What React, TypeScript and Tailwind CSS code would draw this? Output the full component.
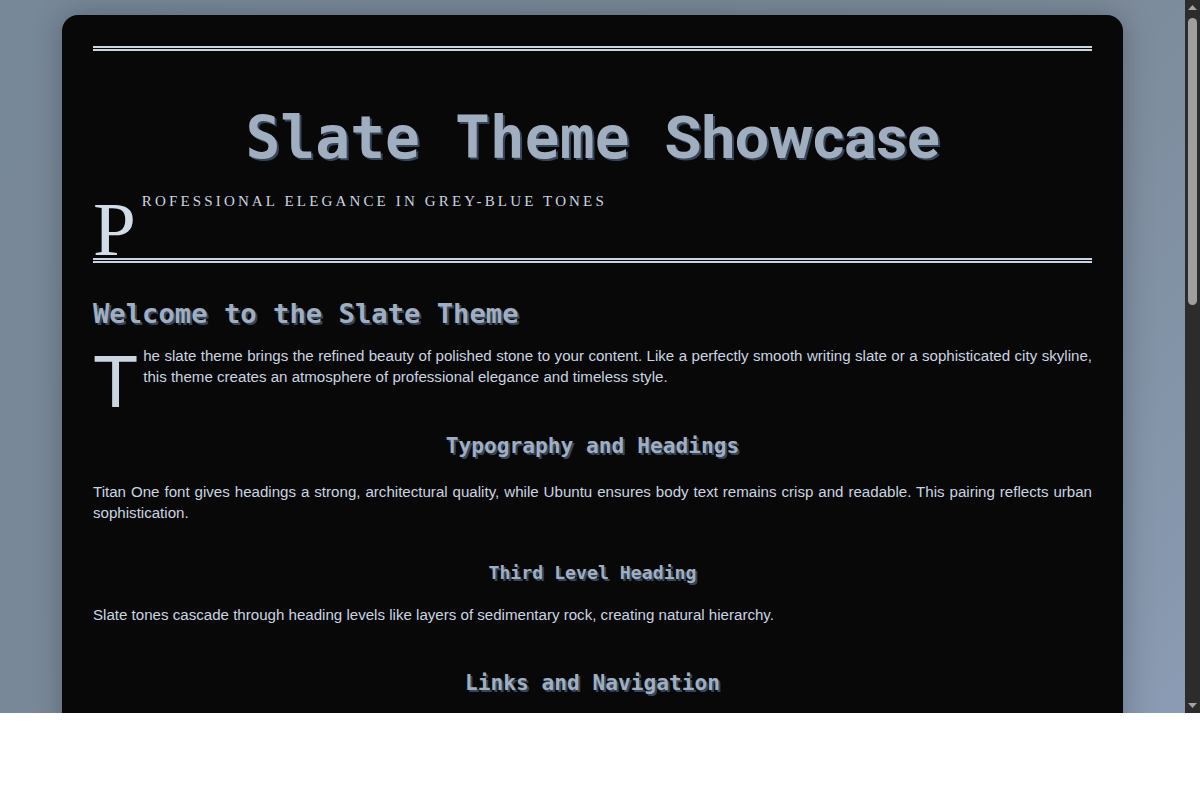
const mono = "font-['DejaVu_Sans_Mono',monospace] font-bold leading-[1.2] text-[#a0aec0] [text-shadow:2px_2px_0_#364559]";
const body = "font-['Liberation_Sans',Arial,sans-serif] text-[15.1px] leading-[21px] text-justify text-[#cbd5e0]";

function DropCap({ letter }: { letter: string }) {
  return (
    <span className="float-left mt-[7px] mr-[5px] font-['Liberation_Sans',Arial,sans-serif] text-[74px] leading-[0.8] text-[#cbd5e0]">
      {letter}
    </span>
  );
}

function Scrollbar() {
  return (
    <div className="flex w-[15px] shrink-0 flex-col bg-[#2c2c2c]">
      <div className="flex h-[15px] items-center justify-center">
        <svg width="9" height="5" viewBox="0 0 9 5">
          <path d="M0 5 L4.5 0 L9 5 Z" fill="#a3a3a3" />
        </svg>
      </div>
      <div className="flex-1 px-[3px] pt-[3px]">
        <div className="h-[287px] rounded-[5px] bg-[#9f9f9f]" />
      </div>
      <div className="flex h-[15px] items-center justify-center">
        <svg width="9" height="5" viewBox="0 0 9 5">
          <path d="M0 0 L9 0 L4.5 5 Z" fill="#a3a3a3" />
        </svg>
      </div>
    </div>
  );
}

export default function App() {
  return (
    <div className="h-[800px] bg-white">
      <div className="flex h-[713px]">
        <div className="flex-1 overflow-hidden bg-[linear-gradient(135deg,#778899_0%,#798898_37%,#7d8c9c_62%,#8a9bb3_100%)] pt-[15px]">
          <main className="mx-auto min-h-[1667px] w-[1061px] rounded-[16px] bg-[#080808] px-[31px] pt-[31px] pb-[40px] shadow-[0_0_30px_rgba(0,0,0,0.25)]">
            <header className="border-y-[5px] border-double border-[#cbd5e1] pt-[51px]">
              <h1 className={`${mono} text-center text-[58px]`}>
                Slate Theme{" "}
                <span className="font-['Roboto',sans-serif] text-[60px] font-bold">Showcase</span>
              </h1>
              <div className="mt-[19px] flex h-[65px] items-start">
                <span className="mt-[6px] mr-[6px] font-['Liberation_Serif',serif] text-[77px] leading-[0.8] text-[#d2dce8]">
                  P
                </span>
                <p className="font-['Liberation_Serif',serif] text-[15px] leading-[16px] tracking-[3.15px] text-[#cbd5e0]">
                  ROFESSIONAL ELEGANCE IN GREY-BLUE TONES
                </p>
              </div>
            </header>

            <section className="mt-[35px]">
              <h2 className={`${mono} text-[27.2px]`}>Welcome to the Slate Theme</h2>
              <p className={`${body} mt-[14px]`}>
                <DropCap letter="T" />
                he slate theme brings the refined beauty of polished stone to your content. Like a perfectly
                smooth writing slate or a sophisticated city skyline, this theme creates an atmosphere of
                professional elegance and timeless style.
              </p>

              <h2 className={`${mono} mt-[46px] text-center text-[21.2px]`}>Typography and Headings</h2>
              <p className={`${body} mt-[23px]`}>
                Titan One font gives headings a strong, architectural quality, while Ubuntu ensures body text
                remains crisp and readable. This pairing reflects urban sophistication.
              </p>

              <h3 className={`${mono} mt-[39px] text-center text-[18.2px]`}>Third Level Heading</h3>
              <p className={`${body} mt-[20px]`}>
                Slate tones cascade through heading levels like layers of sedimentary rock, creating natural
                hierarchy.
              </p>

              <h2 className={`${mono} mt-[45px] text-center text-[21.2px]`}>Links and Navigation</h2>
            </section>
          </main>
        </div>
        <Scrollbar />
      </div>
    </div>
  );
}
